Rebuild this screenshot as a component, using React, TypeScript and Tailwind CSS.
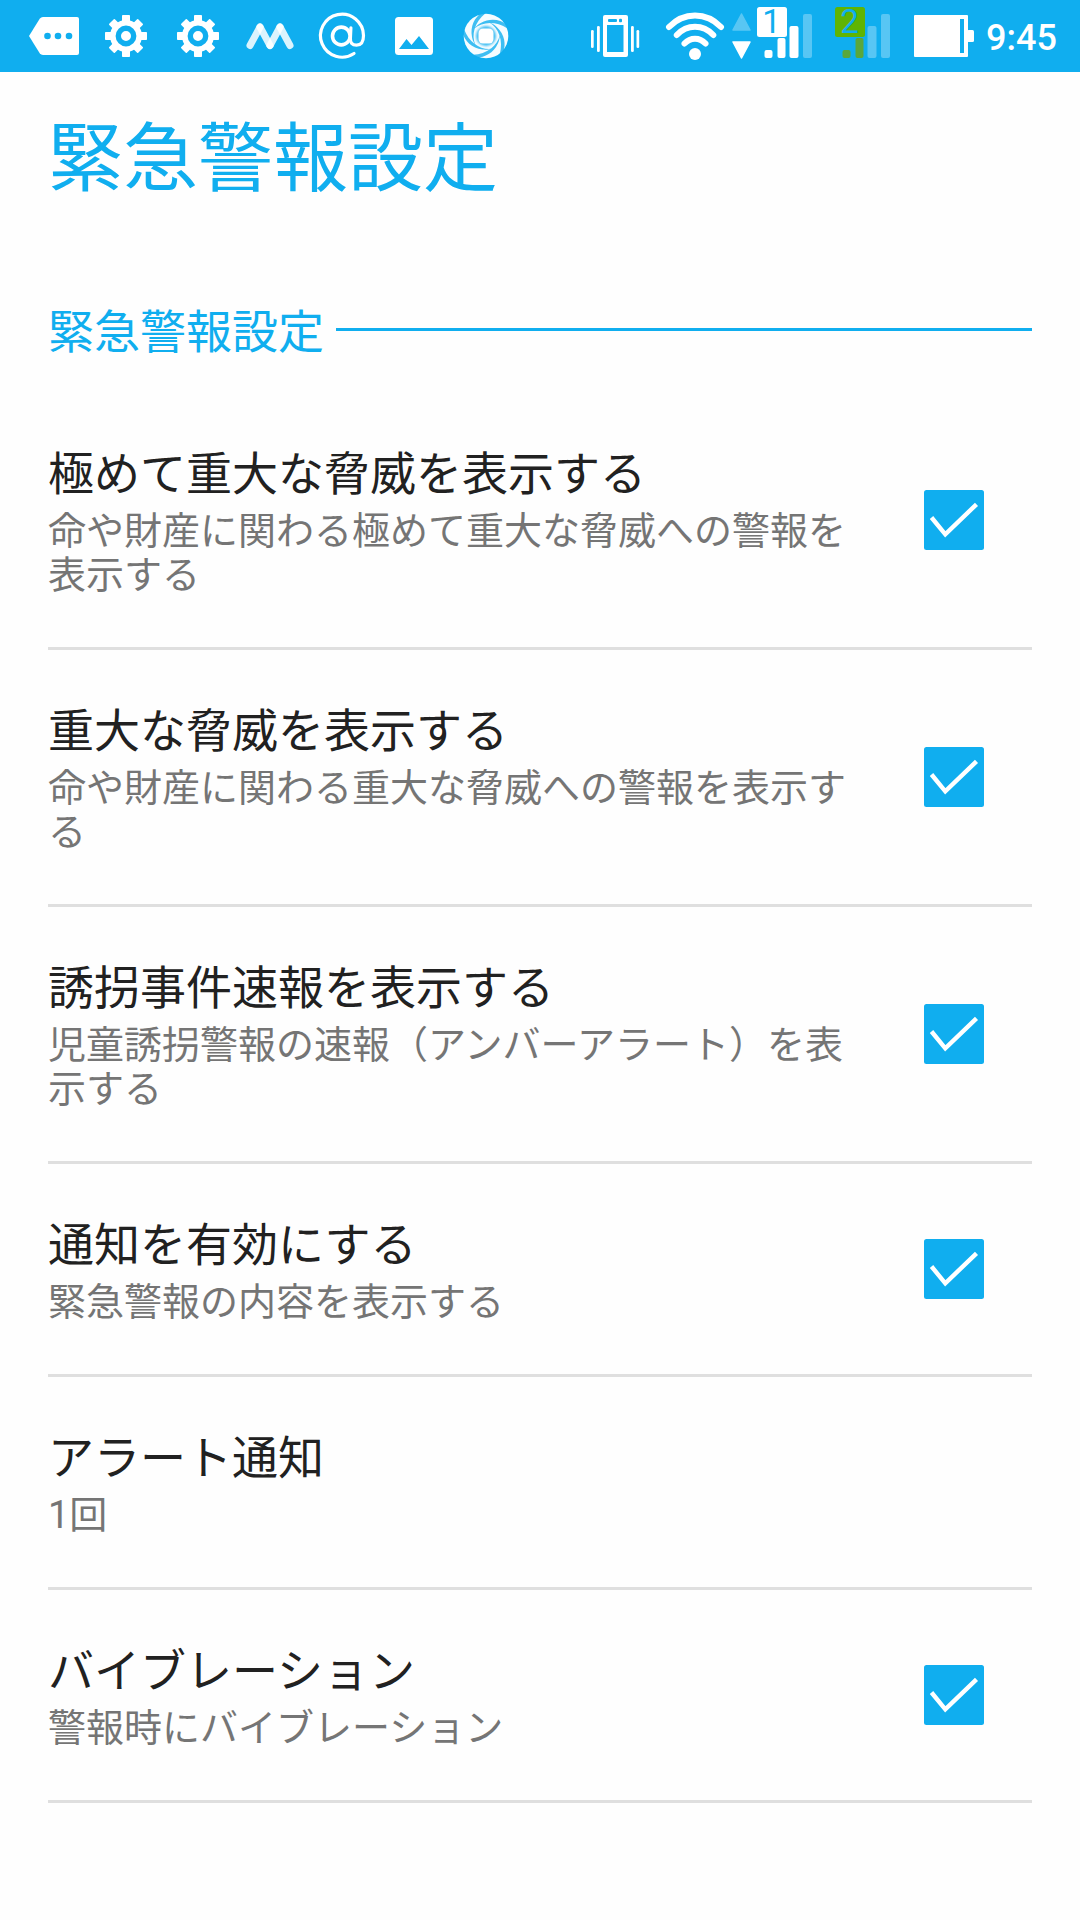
import type { ReactNode } from "react";

function Slot({ children }: { children: ReactNode }) {
  return (
    <svg className="h-[72px] w-[72px] shrink-0" viewBox="0 0 72 72" fill="#fff">
      {children}
    </svg>
  );
}

function Gear() {
  return (
    <Slot>
      {[0, 45, 90, 135].map((a) => (
        <rect key={a} x="32" y={a % 90 ? 15.5 : 15} width="8" height={a % 90 ? 41 : 42} rx="0.8" transform={`rotate(${a} 36 36)`} />
      ))}
      <circle cx="36" cy="36" r="16" />
      <circle cx="36" cy="36" r="7.7" fill="none" stroke="#10aeef" strokeWidth="5.4" />
    </Slot>
  );
}

function LeftIcons() {
  return (
    <div className="flex">
      <Slot>
        <path d="M25 17H59a2 2 0 0 1 2 2V53a2 2 0 0 1-2 2H25q-2 0-3.3-1.8L11 36 21.7 18.8Q23 17 25 17Z" />
        <g fill="#10aeef">
          <circle cx="29.5" cy="36" r="3.3" />
          <circle cx="40" cy="36" r="3.3" />
          <circle cx="51" cy="36" r="3.3" />
        </g>
      </Slot>
      <Gear />
      <Gear />
      <Slot>
        <g fill="none" stroke="#fff" strokeWidth="7" strokeLinecap="round" strokeOpacity="0.85">
          <path d="M16 45.5 26 27" />
          <path d="M26 27 36 45.5" />
          <path d="M36 45.5 46 27" />
          <path d="M46 27 56 45.5" />
        </g>
      </Slot>
      <Slot>
        <g fill="none" stroke="#fff" strokeLinecap="round" strokeLinejoin="round">
          <path d="M48 53.5A21.500 21.500 0 1 1 57.500 35.500C57.500 42 55 45.200 50.500 45.200 46 45.200 44.200 42.500 44.400 38.500L44.900 27.800" strokeWidth="3.2" />
          <ellipse cx="35.300" cy="36" rx="8.800" ry="8.900" strokeWidth="3.6" />
        </g>
      </Slot>
      <Slot>
        <rect x="17" y="17" width="38" height="38" rx="3.5" />
        <path d="M21 49 28.500 39 33.500 45 41 36 51 49Z" fill="#10aeef" />
      </Slot>
      <Slot>
        <circle cx="36" cy="36" r="22.300" fillOpacity="0.96" />
        {[0, 72, 144, 216, 288].map((a) => (
          <path key={a} d="M32 12.500C24.500 17.500 20 26 22 37 22.700 40.500 24 43 25.500 45 21 35 24.500 22 35.500 13.200Z" fill="#10aeef" fillOpacity="0.8" transform={`rotate(${a} 36 36)`} />
        ))}
        <circle cx="36" cy="36" r="10" fill="#10aeef" fillOpacity="0.8" className="blur-[1px]" />
        <rect x="28.5" y="28.5" width="15" height="15" rx="4.5" />
      </Slot>
    </div>
  );
}

function Vibrate() {
  return (
    <svg className="h-[72px] w-[50px] shrink-0" viewBox="590 0 50 72" fill="#fff">
      <rect x="603" y="15" width="25" height="42" rx="2" />
      <rect x="607" y="25" width="16.5" height="27" fill="#10aeef" />
      <rect x="608" y="19" width="9" height="3" rx="1" fill="#10aeef" />
      <rect x="619" y="18.7" width="3" height="3.5" rx="1" fill="#10aeef" />
      <rect x="591" y="30" width="2.7" height="18" rx="1.3" />
      <rect x="597" y="26" width="2.8" height="26" rx="1.3" />
      <rect x="631" y="26" width="2.8" height="26" rx="1.3" />
      <rect x="636.5" y="30" width="2.7" height="18" rx="1.3" />
    </svg>
  );
}

function Wifi() {
  return (
    <svg className="ml-[25px] h-[72px] w-[60px] shrink-0" viewBox="665 0 60 72" fill="none">
      <g stroke="#fff" strokeWidth="6" strokeLinecap="round">
        <path d="M669 27Q680 15.500 695 15.500T721 27" />
        <path d="M676.800 35Q684.500 26.800 695 26.800T713.300 35" />
        <path d="M684.500 43.500Q689 38.700 695 38.700T705.500 43.500" />
      </g>
      <circle cx="695" cy="54" r="6" fill="#fff" />
    </svg>
  );
}

function Arrows() {
  return (
    <svg className="ml-[6px] h-[72px] w-[21px] shrink-0" viewBox="731 0 21 72" fill="#fff" stroke="#fff" strokeLinejoin="round" strokeWidth="1.5">
      <path d="M741.500 14 750 30H733Z" opacity="0.3" />
      <path d="M733 42H750L741.500 58Z" />
    </svg>
  );
}

function Signal({ sim }: { sim: 1 | 2 }) {
  const active = sim === 1;
  return (
    <div className={active ? "relative ml-[5px] h-[72px] w-[56px] shrink-0" : "relative ml-[22px] h-[72px] w-[56px] shrink-0"}>
      <svg className="h-[72px] w-[56px]" viewBox="0 0 56 72" fill="#fff">
        <g fill={active ? "#fff" : "#5aa73c"}>
          <rect x="7.5" y="50" width="8" height="8" rx="2" />
          <rect x="20.5" y="38" width="8" height="20" rx="2" />
        </g>
        <rect x="32.5" y="26" width="9" height="32" rx="2" fillOpacity={active ? 1 : 0.3} />
        <rect x="46" y="14" width="9" height="44" rx="2" fillOpacity="0.3" />
        <rect x="0" y="7" width="30" height="30" rx="2.5" fill={active ? "#fff" : "#5fb404"} />
      </svg>
      <span className="absolute left-0 top-[7px] w-[29px] text-center text-[33px] leading-[30px] text-[#10aeef]">{sim}</span>
    </div>
  );
}

function Battery() {
  return (
    <svg className="ml-[23px] h-[72px] w-[60px] shrink-0" viewBox="914 0 60 72" fill="#fff">
      <rect x="914" y="15" width="54" height="42" rx="1" />
      <rect x="967" y="30" width="7" height="12" rx="1.5" />
      <rect x="960" y="19" width="4" height="34" fill="#10aeef" />
    </svg>
  );
}

function CheckBox() {
  return (
    <svg className="mr-[48px] h-[60px] w-[60px] shrink-0" viewBox="0 0 60 60">
      <rect width="60" height="60" rx="2.5" fill="#10aeef" />
      <path d="M7.500 27.500 21.300 44.300 52.500 14.300" fill="none" stroke="#fff" strokeWidth="4.4" />
    </svg>
  );
}

const settings = [
  { title: "極めて重大な脅威を表示する", detail: "命や財産に関わる極めて重大な脅威への警報を表示する", check: true },
  { title: "重大な脅威を表示する", detail: "命や財産に関わる重大な脅威への警報を表示する", check: true },
  { title: "誘拐事件速報を表示する", detail: "児童誘拐警報の速報（アンバーアラート）を表示する", check: true },
  { title: "通知を有効にする", detail: "緊急警報の内容を表示する", check: true },
  { title: "アラート通知", detail: "1回", check: false },
  { title: "バイブレーション", detail: "警報時にバイブレーション", check: true },
];

export default function App() {
  return (
    <div lang="ja" className="h-[1920px] w-[1080px] overflow-hidden bg-[#fefefe] font-['Roboto','Noto_Sans_CJK_JP',sans-serif]">
      <header className="flex h-[72px] items-center justify-between bg-[#10aeef] pl-[18px] pr-[24px]">
        <LeftIcons />
        <div className="flex items-center">
          <Vibrate />
          <Wifi />
          <Arrows />
          <Signal sim={1} />
          <Signal sim={2} />
          <Battery />
          <span className="ml-[12px] w-[70px] whitespace-nowrap pt-[4px] text-[36px] font-medium leading-[68px] text-white">9:45</span>
        </div>
      </header>
      <main className="px-[48px]">
        <h1 className="h-[233px] pt-[43px] text-[75px] leading-[88px] text-[#10aeef]">緊急警報設定</h1>
        <h2 className="flex h-[88px] text-[46px] leading-[54px] text-[#10aeef]">
          <span className="w-[288px] whitespace-nowrap">緊急警報設定</span>
          <span className="mt-[23px] h-[3px] flex-1 bg-[#10aeef]" />
        </h2>
        <ul>
          {settings.map((s) => (
            <li key={s.title} className="flex items-center justify-between border-b-[3px] border-[#dfdfdf] pb-[50px] pt-[54px]">
              <div className="w-[800px]">
                <div className="mb-[8px] text-[46px] leading-[54px] text-[#212121]">{s.title}</div>
                <div className="break-all text-[38px] leading-[44px] text-[#757575]">{s.detail}</div>
              </div>
              {s.check && <div className="-mt-[4px]"><CheckBox /></div>}
            </li>
          ))}
        </ul>
      </main>
    </div>
  );
}
